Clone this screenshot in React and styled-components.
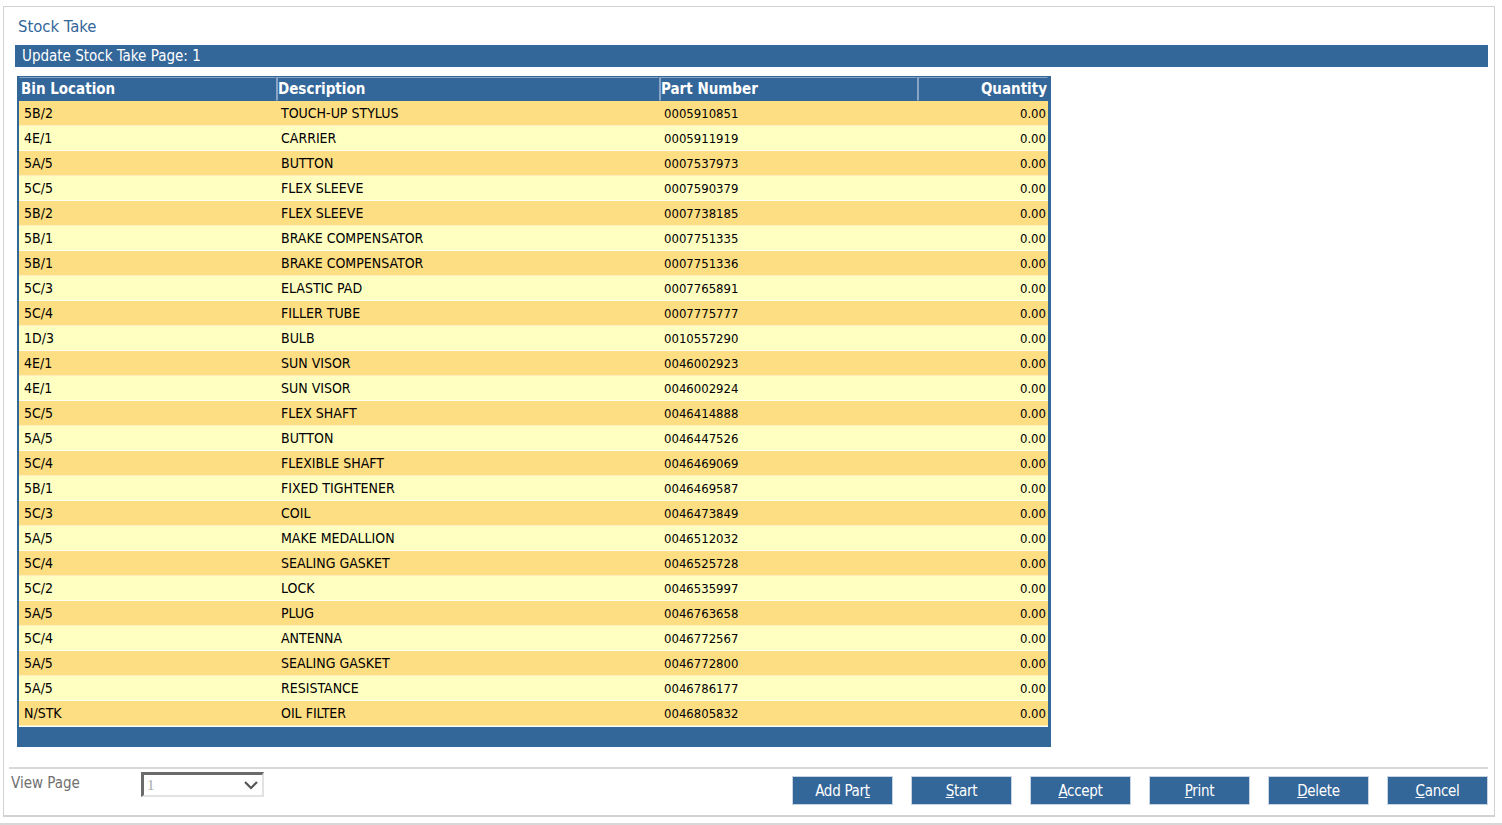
import React from "react";
import styled, { createGlobalStyle } from "styled-components";

const GlobalStyle = createGlobalStyle`
  body {
    margin: 0;
    background: #fff;
    font-family: Tahoma, "DejaVu Sans Condensed", "DejaVu Sans", sans-serif;
    font-size: 14px;
    color: #000;
  }
`;

const rows = [
  ["5B/2", "TOUCH-UP STYLUS", "0005910851"],
  ["4E/1", "CARRIER", "0005911919"],
  ["5A/5", "BUTTON", "0007537973"],
  ["5C/5", "FLEX SLEEVE", "0007590379"],
  ["5B/2", "FLEX SLEEVE", "0007738185"],
  ["5B/1", "BRAKE COMPENSATOR", "0007751335"],
  ["5B/1", "BRAKE COMPENSATOR", "0007751336"],
  ["5C/3", "ELASTIC PAD", "0007765891"],
  ["5C/4", "FILLER TUBE", "0007775777"],
  ["1D/3", "BULB", "0010557290"],
  ["4E/1", "SUN VISOR", "0046002923"],
  ["4E/1", "SUN VISOR", "0046002924"],
  ["5C/5", "FLEX SHAFT", "0046414888"],
  ["5A/5", "BUTTON", "0046447526"],
  ["5C/4", "FLEXIBLE SHAFT", "0046469069"],
  ["5B/1", "FIXED TIGHTENER", "0046469587"],
  ["5C/3", "COIL", "0046473849"],
  ["5A/5", "MAKE MEDALLION", "0046512032"],
  ["5C/4", "SEALING GASKET", "0046525728"],
  ["5C/2", "LOCK", "0046535997"],
  ["5A/5", "PLUG", "0046763658"],
  ["5C/4", "ANTENNA", "0046772567"],
  ["5A/5", "SEALING GASKET", "0046772800"],
  ["5A/5", "RESISTANCE", "0046786177"],
  ["N/STK", "OIL FILTER", "0046805832"],
];

const Page = styled.div`
  padding: 6px 7px 0 3px;
`;

const Panel = styled.div`
  border: 1px solid #d2d2d2;
  border-bottom-width: 2px;
  height: 811px;
  box-sizing: border-box;
  padding: 10px 6px 0 11px;
  display: flex;
  flex-direction: column;
`;

const Title = styled.div`
  color: #336699;
  font-size: 16.5px;
  height: 28px;
  padding-left: 3px;
`;

const Bar = styled.div`
  background: #336699;
  color: #fff;
  font-size: 15px;
  height: 22px;
  line-height: 22px;
  padding-left: 7px;
`;

const TableWrap = styled.div`
  margin: 9px 0 0 2px;
  width: 1034px;
  border-top: 1px solid #336699;
  border-left: 2px solid #336699;
  border-right: 3px solid #336699;
  box-sizing: border-box;
`;

const Grid = styled.div`
  display: grid;
  grid-template-columns: 257px 383px 258px 131px;
`;

const HeadCell = styled.div`
  background: #336699;
  color: #fff;
  font-weight: bold;
  font-size: 15px;
  height: 24px;
  line-height: 23px;
  box-sizing: border-box;
  border: 1px solid #336699;
  border-top: 1px solid #8aa4c6;
  border-left: ${(p) => (p.$first ? "1px solid #336699" : "2px solid #8aa4c6")};
  padding-left: ${(p) => (p.$first ? "1px" : "0")};
  text-align: ${(p) => (p.$right ? "right" : "left")};
  white-space: nowrap;
`;

const Cell = styled.div`
  background: ${(p) => (p.$odd ? "#ffffc2" : "#fede82")};
  height: 25px;
  line-height: 25px;
  box-sizing: border-box;
  border-bottom: 1px solid ${(p) => (p.$odd ? "#fffff0" : "#fdeebc")};
  padding: ${(p) => (p.$right ? "0 2px 0 0" : "0 0 0 5px")};
  font-size: ${(p) => (p.$num ? "13px" : "14px")};
  text-align: ${(p) => (p.$right ? "right" : "left")};
  white-space: nowrap;
`;

const Footer = styled.div`
  height: 20px;
  background: #336699;
  border-top: 1px solid #fff;
`;

const Spacer = styled.div`
  flex: 1;
`;

const Bottom = styled.div`
  margin: 0 0 0 -6px;
  border-top: 2px solid #d8d8d8;
  display: flex;
  align-items: flex-start;
  height: 46px;
`;

const Label = styled.div`
  color: #707070;
  font-size: 15px;
  margin: 5px 0 0 2px;
  width: 130px;
`;

const Select = styled.div`
  margin-top: 3px;
  width: 123px;
  height: 25px;
  box-sizing: border-box;
  border-top: 3px solid #6b6b6b;
  border-left: 3px solid #6b6b6b;
  border-right: 2px solid #e2e2e2;
  border-bottom: 2px solid #e2e2e2;
  display: flex;
  align-items: center;
  justify-content: space-between;
  padding: 0 3px 0 3px;
  color: #a8a8a8;
  font-family: "Liberation Serif", serif;
  font-size: 15px;
`;

const Buttons = styled.div`
  margin-left: auto;
  margin-top: 7px;
  display: flex;
  gap: 18px;
`;

const Button = styled.button`
  width: 101px;
  height: 29px;
  background: #336699;
  color: #fff;
  border: 1px solid #c9d4e3;
  font-family: Tahoma, "DejaVu Sans Condensed", "DejaVu Sans", sans-serif;
  font-size: 15px;
  letter-spacing: -0.3px;
  padding: 0;
  cursor: pointer;
  u {
    text-decoration: underline;
  }
`;

const Chevron = () => (
  <svg width="16" height="10" viewBox="0 0 16 10">
    <path d="M2 2 L8 8 L14 2" fill="none" stroke="#555" strokeWidth="2.2" />
  </svg>
);

const Underline = styled.div`
  margin-top: 6px;
  border-top: 2px solid #d8d8d8;
`;

export default function App() {
  return (
    <>
      <GlobalStyle />
      <Page>
        <Panel>
          <Title>Stock Take</Title>
          <Bar>Update Stock Take Page: 1</Bar>
          <TableWrap>
            <Grid>
              <HeadCell $first>Bin Location</HeadCell>
              <HeadCell>Description</HeadCell>
              <HeadCell>Part Number</HeadCell>
              <HeadCell $right>Quantity</HeadCell>
              {rows.map((r, i) => (
                <React.Fragment key={i}>
                  <Cell $odd={i % 2 === 1}>{r[0]}</Cell>
                  <Cell $odd={i % 2 === 1}>{r[1]}</Cell>
                  <Cell $odd={i % 2 === 1} $num>{r[2]}</Cell>
                  <Cell $odd={i % 2 === 1} $num $right>0.00</Cell>
                </React.Fragment>
              ))}
            </Grid>
            <Footer />
          </TableWrap>
          <Spacer />
          <Bottom>
            <Label>View Page</Label>
            <Select>
              <span>1</span>
              <Chevron />
            </Select>
            <Buttons>
              <Button>Add Par<u>t</u></Button>
              <Button><u>S</u>tart</Button>
              <Button><u>A</u>ccept</Button>
              <Button><u>P</u>rint</Button>
              <Button><u>D</u>elete</Button>
              <Button><u>C</u>ancel</Button>
            </Buttons>
          </Bottom>
        </Panel>
      </Page>
      <Underline />
    </>
  );
}
